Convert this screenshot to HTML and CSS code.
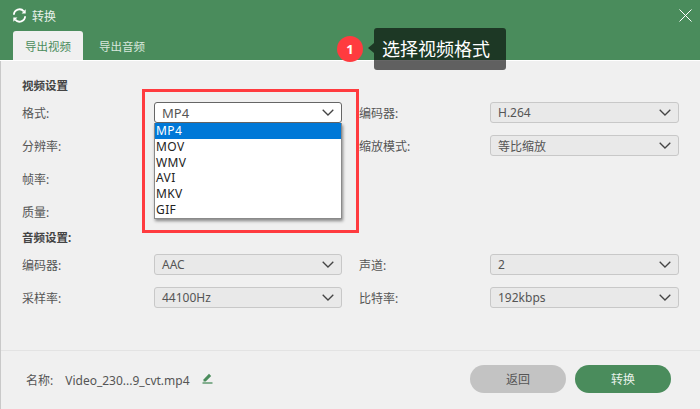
FILE: index.html
```html
<!DOCTYPE html>
<html lang="zh">
<head>
<meta charset="utf-8">
<title>转换</title>
<link rel="stylesheet" href="styles.css">
</head>
<body>
<div class="dialog">
  <header class="head">
    <div class="titlebar">
      <svg class="refresh" viewBox="0 0 16 16" width="15" height="15"><path d="M2 7.2A6 6 0 0 1 12.6 3.6M14 8.8A6 6 0 0 1 3.4 12.4" fill="none" stroke="#fff" stroke-width="2"/><path d="M14.6 1.4v4.4h-4.4zM1.4 14.6v-4.4h4.4z" fill="#fff"/></svg>
      <span class="title">转换</span>
      <svg class="close" viewBox="0 0 13 13" width="13" height="13"><path d="M.5.5l12 12M12.5.5l-12 12" stroke="#fff" stroke-width="1" fill="none"/></svg>
    </div>
    <nav class="tabs">
      <span class="tab active">导出视频</span>
      <span class="tab">导出音频</span>
    </nav>
  </header>

  <main class="body">
    <h2 class="section">视频设置</h2>
    <div class="grid">
      <label>格式:</label>
      <div class="select open"><span>MP4</span><svg class="chev" viewBox="0 0 12 7" width="12" height="7"><path d="M.7.7L6 6l5.3-5.3" fill="none" stroke="#444" stroke-width="1.3"/></svg></div>
      <label>编码器:</label>
      <div class="select"><span>H.264</span><svg class="chev" viewBox="0 0 12 7" width="12" height="7"><path d="M.7.7L6 6l5.3-5.3" fill="none" stroke="#444" stroke-width="1.3"/></svg></div>

      <label>分辨率:</label>
      <div></div>
      <label>缩放模式:</label>
      <div class="select"><span>等比缩放</span><svg class="chev" viewBox="0 0 12 7" width="12" height="7"><path d="M.7.7L6 6l5.3-5.3" fill="none" stroke="#444" stroke-width="1.3"/></svg></div>

      <label>帧率:</label>
      <div></div><div></div><div></div>

      <label>质量:</label>
      <div></div><div></div><div></div>
    </div>

    <h2 class="section audio">音频设置:</h2>
    <div class="grid">
      <label>编码器:</label>
      <div class="select"><span>AAC</span><svg class="chev" viewBox="0 0 12 7" width="12" height="7"><path d="M.7.7L6 6l5.3-5.3" fill="none" stroke="#444" stroke-width="1.3"/></svg></div>
      <label>声道:</label>
      <div class="select"><span>2</span><svg class="chev" viewBox="0 0 12 7" width="12" height="7"><path d="M.7.7L6 6l5.3-5.3" fill="none" stroke="#444" stroke-width="1.3"/></svg></div>

      <label>采样率:</label>
      <div class="select"><span>44100Hz</span><svg class="chev" viewBox="0 0 12 7" width="12" height="7"><path d="M.7.7L6 6l5.3-5.3" fill="none" stroke="#444" stroke-width="1.3"/></svg></div>
      <label>比特率:</label>
      <div class="select"><span>192kbps</span><svg class="chev" viewBox="0 0 12 7" width="12" height="7"><path d="M.7.7L6 6l5.3-5.3" fill="none" stroke="#444" stroke-width="1.3"/></svg></div>
    </div>
  </main>

  <footer class="foot">
    <span class="name-label">名称:</span>
    <span class="name">Video_230...9_cvt.mp4</span>
    <svg class="pen" viewBox="0 0 11 12" width="11" height="12"><path d="M1.5 7.5L7 1.8l2.2 2.2L3.7 9.6H1.5z" fill="#4a8c5c"/><path d="M0.5 11h10" stroke="#4a8c5c" stroke-width="1.3"/></svg>
    <div class="actions">
      <button class="btn back">返回</button>
      <button class="btn go">转换</button>
    </div>
  </footer>

  <ul class="dropdown">
    <li class="on">MP4</li>
    <li>MOV</li>
    <li>WMV</li>
    <li>AVI</li>
    <li>MKV</li>
    <li>GIF</li>
  </ul>
  <div class="redbox"></div>
  <div class="badge">1</div>
  <div class="tip">选择视频格式</div>
</div>
</body>
</html>
```
FILE: styles.css
```css
* { box-sizing: border-box; }
html, body { margin: 0; padding: 0; }
body { width: 700px; height: 409px; overflow: hidden; background: #f0f0f0; font-family: "Noto Sans", "Noto Sans CJK SC", sans-serif; font-size: 12px; color: #555; }
.dialog { position: relative; width: 700px; height: 409px; display: flex; flex-direction: column; background: #f0f0f0; border-left: 1px solid #c9c9c9; }
.head { height: 61px; background: #4a8c5c; border-bottom: 1px solid #fff; padding-left: 13px; display: flex; flex-direction: column; margin-left: -1px; }
.titlebar { height: 31px; display: flex; align-items: center; color: #e8f1ea; }
.refresh { flex: none; margin-left: -1px; }
.title { margin-left: 5px; font-size: 12px; }
.close { margin-left: auto; margin-right: 8px; }
.tabs { display: flex; height: 29px; }
.tab { width: 70px; display: flex; align-items: center; justify-content: center; color: #d9e8dc; font-size: 11.5px; }
.tab + .tab { width: 78px; }
.tab.active { background: #f0f0f0; color: #4a8c5c; border-radius: 3px 3px 0 0; }
.body { padding: 17px 21px 0 21px; flex: 1; }
.section { margin: 0; font-size: 11.5px; line-height: 16px; font-weight: bold; color: #444; }
.section.audio { margin-top: 2px; }
.grid { display: grid; grid-template-columns: 132px 188px 148px 189px; grid-auto-rows: 33px; align-items: center; }
.section + .grid { margin-top: 2px; }
.section.audio + .grid { margin-top: 2px; }
.grid label:nth-child(4n+3) { padding-left: 17px; }
label { font-size: 12px; color: #555; }
.select { height: 21px; display: flex; align-items: center; justify-content: space-between; padding: 0 7px 0 7px; background: #e9e9e9; border: 1px solid #c8c8c8; border-radius: 3px; font-size: 12px; color: #555; }
.select.open { background: #fff; border-color: #666; font-size: 13px; }
.foot { height: 59px; border-top: 1px solid #e3e3e3; display: flex; align-items: center; padding: 0 29px 0 25px; }
.name-label { color: #555; font-size: 12px; margin-right: 12px; }
.name { font-size: 12px; color: #555; margin-right: 12px; }
.pen { flex: none; margin-top: -4px; }
.actions { margin-left: auto; display: flex; gap: 9px; margin-top: -2px; }
.btn { width: 96px; height: 28px; border: 0; border-radius: 14px; font: 12px "Noto Sans", "Noto Sans CJK SC", sans-serif; }
.back { background: #c3c3c3; color: #555; }
.go { background: #4a8c5c; color: #e8f1ea; }
.dropdown { position: absolute; left: 153px; top: 123px; width: 188px; margin: 0; padding: 0; list-style: none; background: #fff; border: 1px solid #8a8a8a; border-top: 0; box-shadow: 1px 2px 3px rgba(0,0,0,.45); font-size: 12px; letter-spacing: .4px; line-height: 15.8px; color: #222; }
.dropdown li { padding-left: 1px; }
.dropdown li.on { background: #0078d7; color: #fff; }
.redbox { position: absolute; left: 141px; top: 89px; width: 217px; height: 144px; border: 3px solid #ff3b3f; pointer-events: none; }
.badge { position: absolute; left: 336px; top: 36px; width: 26px; height: 26px; border-radius: 50%; background: #ff3b3f; color: #fff; display: flex; align-items: center; justify-content: center; font-size: 13px; font-weight: bold; }
.tip { position: absolute; left: 373px; top: 28px; width: 132px; height: 42px; padding-left: 8px; border-radius: 3px; background: rgba(0,0,0,.6); color: #fff; font-size: 18px; line-height: 42px; }
.tip::before { content: ""; position: absolute; left: -6px; top: 15px; border: 5px solid transparent; border-left: 0; border-right: 6px solid rgba(0,0,0,.6); }
```
